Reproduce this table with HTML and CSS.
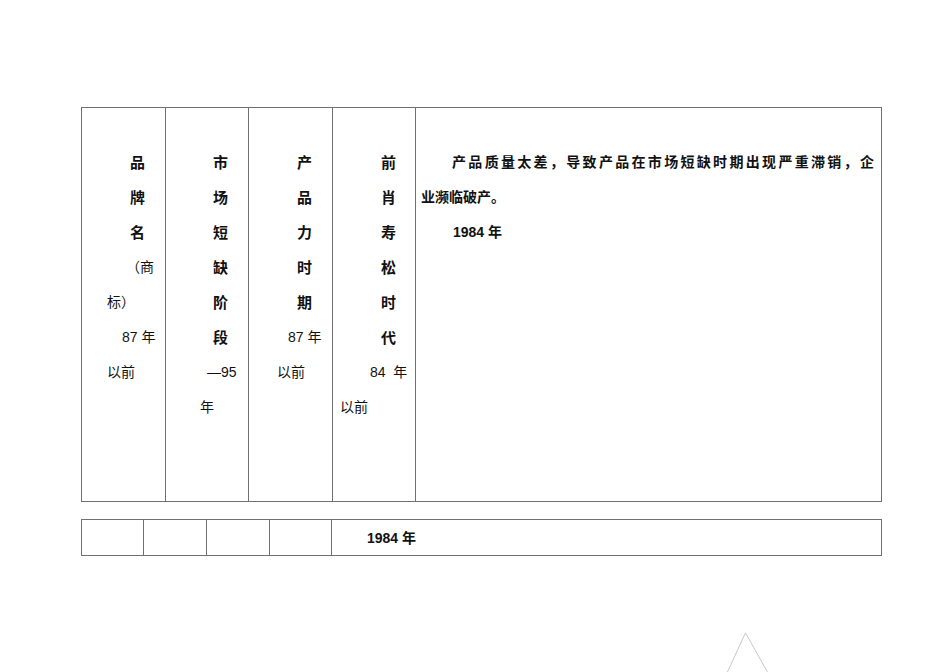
FILE: index.html
```html
<!DOCTYPE html>
<html lang="zh-CN">
<head>
<meta charset="utf-8">
<title>品牌</title>
<link rel="stylesheet" href="styles.css">
</head>
<body>
<div class="page">
  <div class="tbl top">
    <div class="cell c1">
      <div class="ln b big p48">品</div>
      <div class="ln b big p48">牌</div>
      <div class="ln b big p48">名</div>
      <div class="ln p44">（商</div>
      <div class="ln p25">标）</div>
      <div class="ln p40">87 年</div>
      <div class="ln p25">以前</div>
    </div>
    <div class="cell c2">
      <div class="ln b big p47">市</div>
      <div class="ln b big p47">场</div>
      <div class="ln b big p47">短</div>
      <div class="ln b big p47">缺</div>
      <div class="ln b big p47">阶</div>
      <div class="ln b big p47">段</div>
      <div class="ln p41">—95</div>
      <div class="ln p34">年</div>
    </div>
    <div class="cell c3">
      <div class="ln b big p48">产</div>
      <div class="ln b big p48">品</div>
      <div class="ln b big p48">力</div>
      <div class="ln b big p48">时</div>
      <div class="ln b big p48">期</div>
      <div class="ln p39">87 年</div>
      <div class="ln p28">以前</div>
    </div>
    <div class="cell c4">
      <div class="ln b big p48">前</div>
      <div class="ln b big p48">肖</div>
      <div class="ln b big p48">寿</div>
      <div class="ln b big p48">松</div>
      <div class="ln b big p48">时</div>
      <div class="ln b big p48">代</div>
      <div class="ln p37">84&nbsp; 年</div>
      <div class="ln p7">以前</div>
    </div>
    <div class="cell c5">
      <div class="para">
        <div class="ln b first">产品质量太差，导致产品在市场短缺时期出现严重滞销，企</div>
        <div class="ln b">业濒临破产。</div>
        <div class="ln b ind">1984 年</div>
      </div>
    </div>
  </div>

  <div class="tbl bottom">
    <div class="cell"></div>
    <div class="cell"></div>
    <div class="cell"></div>
    <div class="cell"></div>
    <div class="cell last"><span class="b">1984 年</span></div>
  </div>
</div>

<svg class="mark" width="46" height="42" viewBox="0 0 46 42" aria-hidden="true">
  <polyline points="0.5,42 19.5,0.8 42.5,42" fill="none" stroke="#c8c8c8" stroke-width="1"/>
</svg>
</body>
</html>
```

FILE: styles.css
```css
html, body {
  margin: 0;
  padding: 0;
  width: 950px;
  height: 672px;
  overflow: hidden;
  background: #ffffff;
}

body {
  position: relative;
  font-family: "Liberation Sans", "Noto Sans CJK SC", sans-serif;
  font-size: 14px;
  color: #111;
}

.page {
  padding: 107px 0 0 81px;
  display: flex;
  flex-direction: column;
  gap: 17px;
}

.tbl {
  display: grid;
  width: 801px;
  box-sizing: border-box;
  border-left: 1px solid #707070;
  border-top: 1px solid #707070;
}

.tbl .cell {
  box-sizing: border-box;
  border-right: 1px solid #707070;
  border-bottom: 1px solid #707070;
}

.top {
  grid-template-columns: 84px 83px 84px 83px 466px;
  height: 395px;
}

.top .cell {
  padding-top: 36.5px;
}

.bottom {
  grid-template-columns: 62px 63px 63px 62px 550px;
  height: 37px;
}

.bottom .last {
  display: flex;
  align-items: center;
  padding-left: 35px;
  padding-bottom: 1px;
}

.ln {
  line-height: 35.15px;
  height: 35.15px;
  white-space: nowrap;
}

.b {
  font-weight: bold;
}

.big {
  font-size: 15px;
}

.p7 { padding-left: 7px; }
.p25 { padding-left: 25px; }
.p28 { padding-left: 28px; }
.p34 { padding-left: 34px; }
.p37 { padding-left: 37px; }
.p39 { padding-left: 39px; }
.p40 { padding-left: 40px; }
.p41 { padding-left: 41px; }
.p44 { padding-left: 44px; }
.p47 { padding-left: 47px; }
.p48 { padding-left: 48px; }
.p49 { padding-left: 49px; }

.c5 .para {
  padding: 0 7px 0 5px;
}

.c5 .first {
  padding-left: 31px;
  text-align: justify;
  text-align-last: justify;
  white-space: normal;
}

.c5 .ind {
  padding-left: 32px;
}

.mark {
  position: absolute;
  left: 726px;
  top: 632px;
}
```
